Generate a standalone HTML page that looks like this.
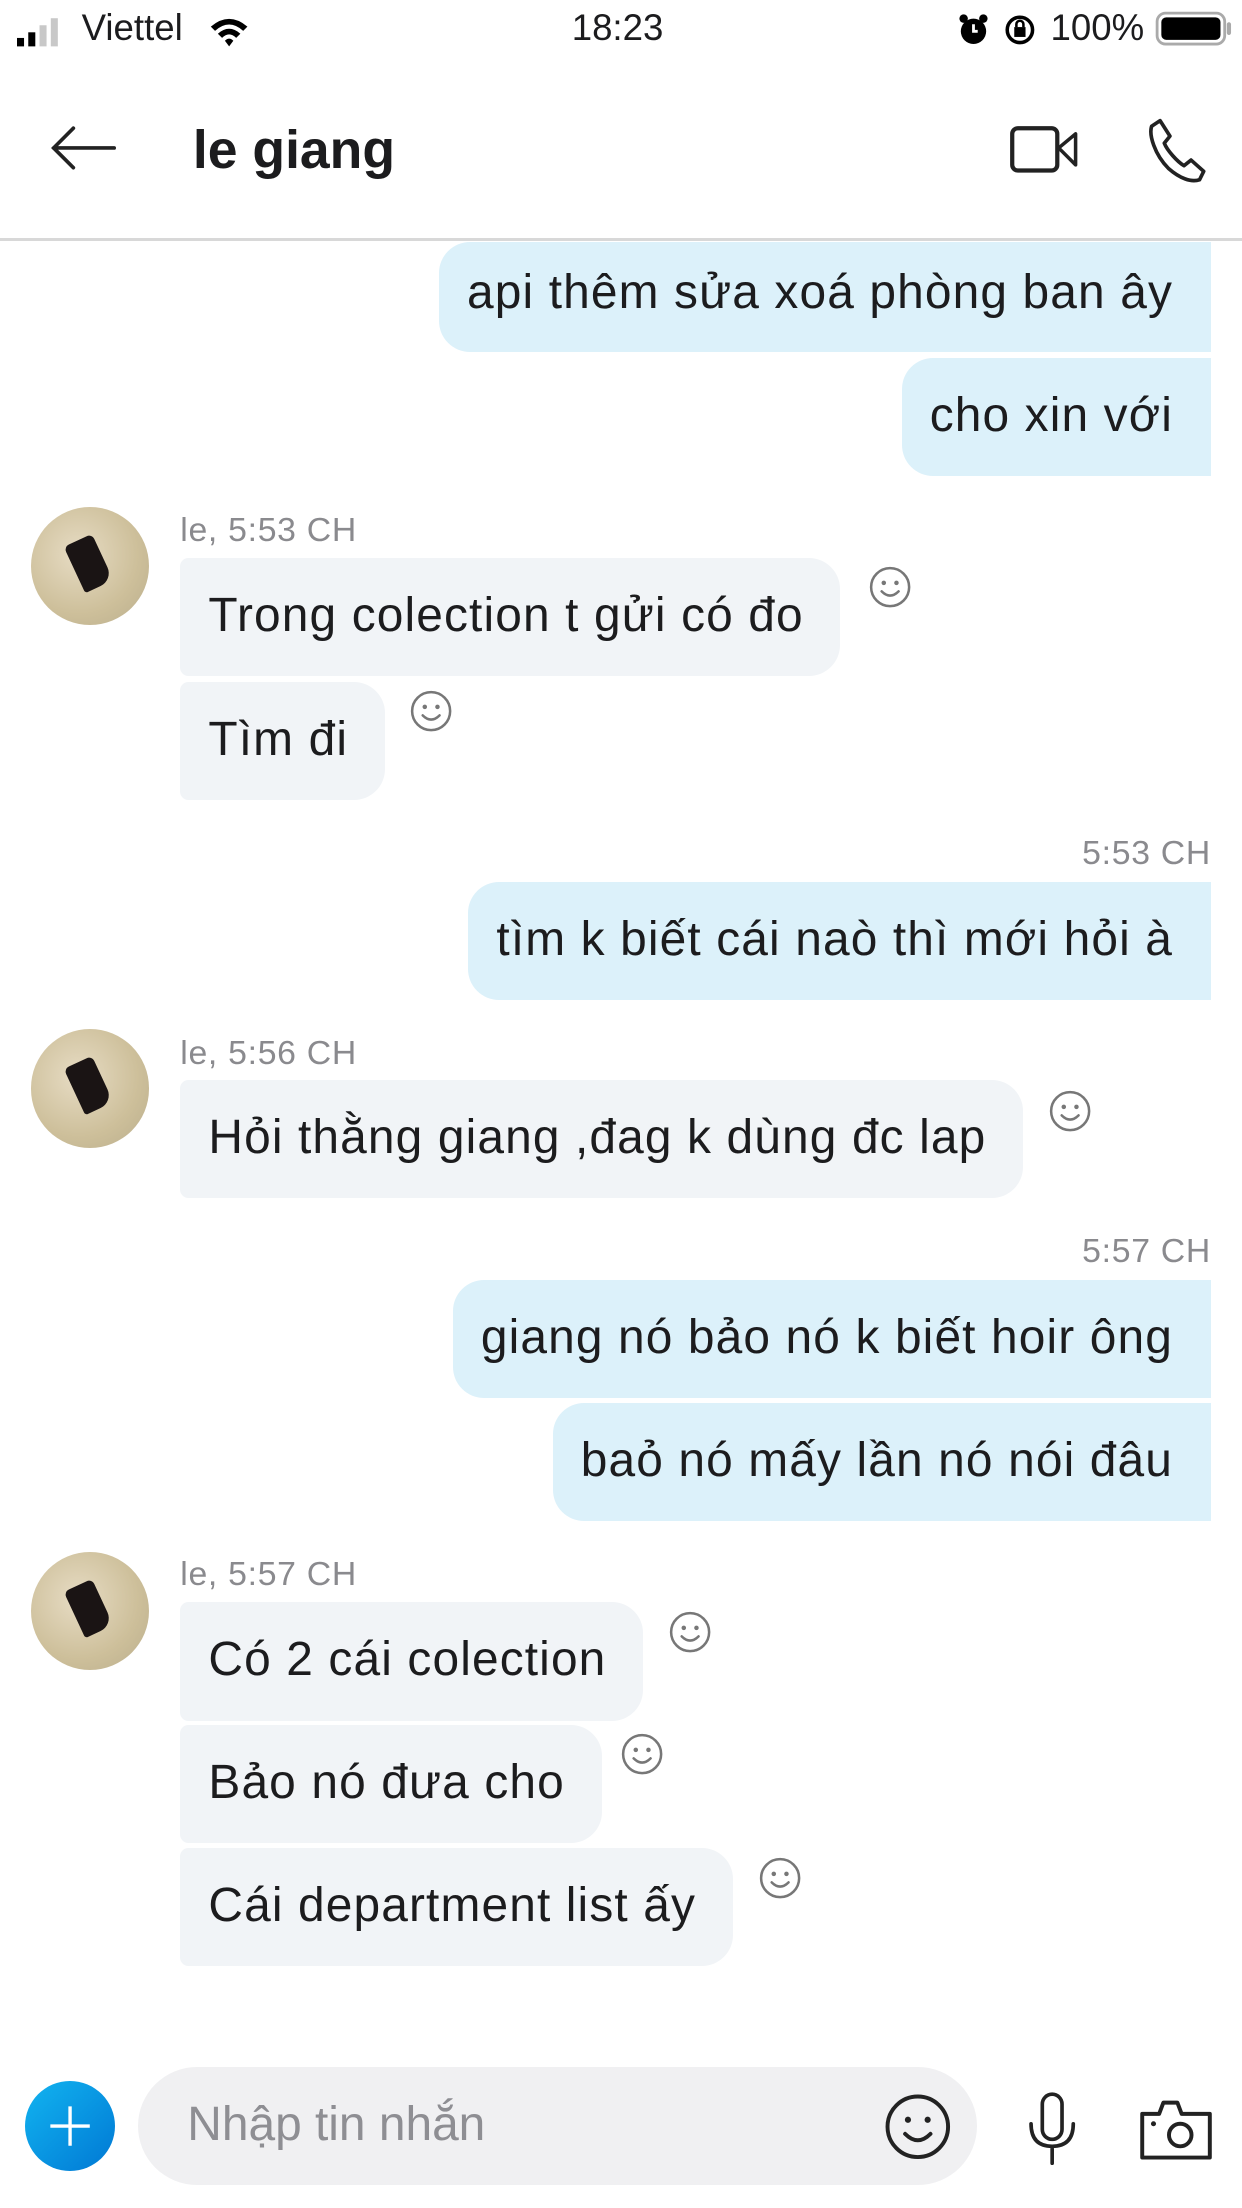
<!DOCTYPE html>
<html><head><meta charset="utf-8">
<style>
html,body{margin:0;padding:0;background:#fff;}
body{width:882px;height:1568px;zoom:1.40816;position:relative;overflow:hidden;font-family:"Liberation Sans",Arial,sans-serif;color:#1c1c1e;}
.a{position:absolute;}
.out{position:absolute;right:22px;height:84px;line-height:82px;background:#dcf1fa;border-radius:22px 0 0 22px;padding:0 27px 0 20px;font-size:34px;letter-spacing:0.8px;white-space:nowrap;}
.in{position:absolute;left:128px;height:84px;line-height:82px;background:#f1f4f7;border-radius:6px 22px 22px 6px;padding:0 26px 0 20px;font-size:34px;letter-spacing:0.8px;white-space:nowrap;}
.lbl{position:absolute;font-size:24px;letter-spacing:0.5px;color:#8a8a8e;}
.av{position:absolute;left:22px;width:84px;height:84px;border-radius:50%;background:radial-gradient(circle at 40% 40%,#e7dcc4,#cdbf9a 60%,#b9ad8c);overflow:hidden;}
.av:after{content:"";position:absolute;left:30px;top:22px;width:22px;height:36px;background:#1a1414;transform:rotate(-25deg);border-radius:4px 4px 10px 2px;}
.sm{position:absolute;width:30px;height:30px;}
</style></head><body>
<div class="a" style="left:12px;top:10px;">
<svg width="40" height="24"><rect x="0" y="17" width="5" height="6" fill="#000"/><rect x="8" y="13" width="5" height="10" fill="#000"/><rect x="16" y="8" width="5" height="15" fill="#c8c8c8"/><rect x="24" y="3" width="5" height="20" fill="#c8c8c8"/></svg></div>
<div class="a" style="left:58px;top:5px;font-size:26px;">Viettel</div>
<svg class="a" style="left:148px;top:10px" width="30" height="24" viewBox="0 0 30 24"><path d="M2 9 Q15 -2 28 9 L25 12 Q15 3 5 12Z" fill="#000"/><path d="M7 14 Q15 7 23 14 L20 17 Q15 12 10 17Z" fill="#000"/><path d="M12 19 Q15 16 18 19 L15 23Z" fill="#000"/></svg>
<div class="a" style="left:406px;top:5px;font-size:26px;">18:23</div>
<svg class="a" style="left:680px;top:9px" width="22" height="24"><circle cx="11" cy="13" r="9" fill="#000"/><path d="M11 8v5h3" stroke="#fff" stroke-width="2" fill="none"/><circle cx="4" cy="4" r="3" fill="#000"/><circle cx="18" cy="4" r="3" fill="#000"/></svg>
<svg class="a" style="left:712px;top:9px" width="24" height="24"><circle cx="12" cy="12" r="9" stroke="#000" stroke-width="2.5" fill="none"/><rect x="8" y="10" width="8" height="7" fill="#000"/><path d="M9.5 10V8a2.5 2.5 0 0 1 5 0v2" stroke="#000" stroke-width="1.8" fill="none"/></svg>
<div class="a" style="left:746px;top:5px;font-size:26px;">100%</div>
<svg class="a" style="left:820px;top:8px" width="56" height="26"><rect x="1.5" y="1.5" width="48" height="22" rx="6" stroke="#aaa" stroke-width="2" fill="none"/><rect x="4.5" y="4.5" width="42" height="16" rx="3.5" fill="#000"/><rect x="51" y="8" width="3" height="9" rx="1.5" fill="#aaa"/></svg>
<svg class="a" style="left:34px;top:88px" width="50" height="34"><path d="M47 17H4M18 3 4 17 18 31" stroke="#222" stroke-width="2.6" fill="none" stroke-linecap="round"/></svg>
<div class="a" style="left:137px;top:85px;font-size:38px;font-weight:bold;">le giang</div>
<svg class="a" style="left:716px;top:88px" width="54" height="36"><rect x="3" y="3" width="32" height="30" rx="4" stroke="#222" stroke-width="3" fill="none"/><path d="M36 17 48 7v22z" stroke="#222" stroke-width="2.5" fill="none" stroke-linejoin="round"/></svg>
<svg class="a" style="left:814px;top:82px" width="44" height="50" viewBox="0 0 44 50"><path d="M10 4 4 8C2 14 6 28 16 38 24 45 32 48 38 46L41 40 32 32 27 36C22 33 15 25 13 20L17 15Z" stroke="#222" stroke-width="2.6" fill="none" stroke-linejoin="round"/></svg>
<div class="a" style="left:0;top:169px;width:882px;height:2px;background:#d8d8d8;"></div>
<div class="out" style="top:172px;height:78px;line-height:72px;">api thêm sửa xoá phòng ban ây</div>
<div class="out" style="top:254px;">cho xin với</div>
<div class="av" style="top:360px;"></div>
<div class="lbl" style="left:128px;top:363px;">le, 5:53 CH</div>
<div class="in" style="top:396px;">Trong colection t gửi có đo</div>
<div class="in" style="top:484px;">Tìm đi</div>
<div class="lbl" style="right:22px;top:592px;">5:53 CH</div>
<div class="out" style="top:626px;">tìm k biết cái naò thì mới hỏi à</div>
<div class="av" style="top:731px;"></div>
<div class="lbl" style="left:128px;top:734px;">le, 5:56 CH</div>
<div class="in" style="top:767px;">Hỏi thằng giang ,đag k dùng đc lap</div>
<div class="lbl" style="right:22px;top:875px;">5:57 CH</div>
<div class="out" style="top:909px;">giang nó bảo nó k biết hoir ông</div>
<div class="out" style="top:996px;">baỏ nó mấy lần nó nói đâu</div>
<div class="av" style="top:1102px;"></div>
<div class="lbl" style="left:128px;top:1104px;">le, 5:57 CH</div>
<div class="in" style="top:1138px;">Có 2 cái colection</div>
<div class="in" style="top:1225px;">Bảo nó đưa cho</div>
<div class="in" style="top:1312px;">Cái department list ấy</div>
<svg width="0" height="0" style="position:absolute"><defs><g id="s"><circle cx="15" cy="15" r="13.5" stroke="#777" stroke-width="1.8" fill="none"/><circle cx="10.5" cy="12" r="1.6" fill="#777"/><circle cx="19.5" cy="12" r="1.6" fill="#777"/><path d="M9 18q6 6 12 0" stroke="#777" stroke-width="1.8" fill="none" stroke-linecap="round"/></g></defs></svg>
<svg class="sm" style="left:617px;top:402px"><use href="#s"/></svg>
<svg class="sm" style="left:291px;top:490px"><use href="#s"/></svg>
<svg class="sm" style="left:745px;top:774px"><use href="#s"/></svg>
<svg class="sm" style="left:475px;top:1144px"><use href="#s"/></svg>
<svg class="sm" style="left:441px;top:1231px"><use href="#s"/></svg>
<svg class="sm" style="left:539px;top:1319px"><use href="#s"/></svg>
<div class="a" style="left:18px;top:1478px;width:64px;height:64px;border-radius:50%;background:linear-gradient(135deg,#12b4f0,#0078d4);"></div>
<svg class="a" style="left:18px;top:1478px" width="64" height="64"><path d="M32 18v28M18 32h28" stroke="#fff" stroke-width="2.4"/></svg>
<div class="a" style="left:98px;top:1468px;width:596px;height:84px;border-radius:42px;background:#f0f0f2;"></div>
<div class="a" style="left:133px;top:1489px;font-size:34px;color:#8e8e93;">Nhập tin nhắn</div>
<svg class="a" style="left:628px;top:1486px" width="48" height="48"><circle cx="24" cy="24" r="21.5" stroke="#222" stroke-width="2.8" fill="none"/><circle cx="17" cy="19" r="2.2" fill="#222"/><circle cx="31" cy="19" r="2.2" fill="#222"/><path d="M15 29q9 9 18 0" stroke="#222" stroke-width="2.8" fill="none" stroke-linecap="round"/></svg>
<svg class="a" style="left:727px;top:1484px" width="40" height="56"><rect x="13" y="3" width="14" height="32" rx="7" stroke="#222" stroke-width="2.6" fill="none"/><path d="M5 24q0 16 15 16t15-16M20 40v12" stroke="#222" stroke-width="2.6" fill="none" stroke-linecap="round"/></svg>
<svg class="a" style="left:808px;top:1489px" width="54" height="46"><path d="M3 12h12l3-8h10l3 8h20v31H3z" stroke="#222" stroke-width="2.8" fill="none" stroke-linejoin="round"/><circle cx="30" cy="27" r="8" stroke="#222" stroke-width="2.8" fill="none"/><circle cx="11" cy="19" r="1.8" fill="#222"/></svg>
</body></html>
